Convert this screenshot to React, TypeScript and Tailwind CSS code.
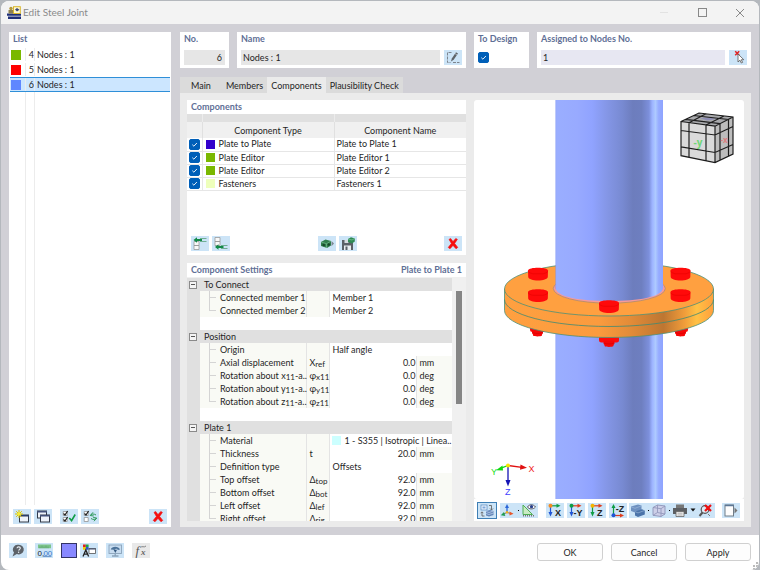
import { useState } from 'react'
import type { ReactNode } from 'react'
import clsx from 'clsx'

interface ListItem {
  no: number
  name: string
  color: string
}

interface ComponentRow {
  type: string
  name: string
  color: string
}

interface SettingRow {
  label: ReactNode
  symbol?: ReactNode
  text?: string
  value?: string
  unit?: string
  swatch?: string
}

interface SettingGroup {
  title: string
  rows: SettingRow[]
}

const listItems: ListItem[] = [
  { no: 4, name: 'Nodes : 1', color: 'bg-[#7ab800]' },
  { no: 5, name: 'Nodes : 1', color: 'bg-[#ff0000]' },
  { no: 6, name: 'Nodes : 1', color: 'bg-[#5f87ff]' },
]

const componentRows: ComponentRow[] = [
  { type: 'Plate to Plate', name: 'Plate to Plate 1', color: 'bg-[#3300cc]' },
  { type: 'Plate Editor', name: 'Plate Editor 1', color: 'bg-[#7ab800]' },
  { type: 'Plate Editor', name: 'Plate Editor 2', color: 'bg-[#7ab800]' },
  { type: 'Fasteners', name: 'Fasteners 1', color: 'bg-[#eeffbb]' },
]

function Sub({ children }: { children: ReactNode }) {
  return <span className="relative top-px text-[8px] leading-none">{children}</span>
}

const groups: SettingGroup[] = [
  {
    title: 'To Connect',
    rows: [
      { label: 'Connected member 1', text: 'Member 1' },
      { label: 'Connected member 2', text: 'Member 2' },
    ],
  },
  {
    title: 'Position',
    rows: [
      { label: 'Origin', text: 'Half angle' },
      { label: 'Axial displacement', symbol: <>X<Sub>ref</Sub></>, value: '0.0', unit: 'mm' },
      { label: <>Rotation about x<Sub>11</Sub>-a..</>, symbol: <>φ<Sub>x11</Sub></>, value: '0.0', unit: 'deg' },
      { label: <>Rotation about y<Sub>11</Sub>-a..</>, symbol: <>φ<Sub>y11</Sub></>, value: '0.0', unit: 'deg' },
      { label: <>Rotation about z<Sub>11</Sub>-a..</>, symbol: <>φ<Sub>z11</Sub></>, value: '0.0', unit: 'deg' },
    ],
  },
  {
    title: 'Plate 1',
    rows: [
      { label: 'Material', text: '1 - S355 | Isotropic | Linea..', swatch: 'bg-[#ccffff]' },
      { label: 'Thickness', symbol: 't', value: '20.0', unit: 'mm' },
      { label: 'Definition type', text: 'Offsets' },
      { label: 'Top offset', symbol: <>Δ<Sub>top</Sub></>, value: '92.0', unit: 'mm' },
      { label: 'Bottom offset', symbol: <>Δ<Sub>bot</Sub></>, value: '92.0', unit: 'mm' },
      { label: 'Left offset', symbol: <>Δ<Sub>lef</Sub></>, value: '92.0', unit: 'mm' },
      { label: 'Right offset', symbol: <>Δ<Sub>rig</Sub></>, value: '92.0', unit: 'mm' },
    ],
  },
]

// ---------- icons, all on an 18 x 15 grid ----------

function Icon({ children }: { children: ReactNode }) {
  return (
    <svg viewBox="0 0 18 15" className="h-[15px] w-[18px] shrink-0" fill="none" aria-hidden="true">
      {children}
    </svg>
  )
}

function DeleteIcon() {
  return (
    <Icon>
      <path d="M5 3.4 6.6 2.4 9 5.6 11.8 2.4 13.4 3.4 10.6 7.4 13.8 11.4 12 12.8 9 9.4 6 12.8 4.2 11.4 7.4 7.4Z" fill="#f50f0f" stroke="#f50f0f" strokeWidth=".6" />
    </Icon>
  )
}

function NewIcon() {
  return (
    <Icon>
      <rect x="6.5" y="6" width="9" height="7" fill="#eef3fa" stroke="#333a48" />
      <path d="M6 6.7h10" stroke="#2c3e6b" strokeWidth="1.6" />
      <path d="M6 1v8M2 5h8M3.2 2.2l5.6 5.6M8.8 2.2 3.2 7.8" stroke="#d8c400" strokeWidth="1" />
      <circle cx="6" cy="5" r="1.8" fill="#f8ee30" />
    </Icon>
  )
}

function CopyIcon() {
  return (
    <Icon>
      <rect x="3.5" y="2" width="9" height="7" fill="#eef3fa" stroke="#333a48" />
      <path d="M3 2.7h10" stroke="#44527a" strokeWidth="1.6" />
      <rect x="6.5" y="6" width="9" height="7" fill="#eef3fa" stroke="#333a48" />
      <path d="M6 6.7h10" stroke="#44527a" strokeWidth="1.6" />
    </Icon>
  )
}

function CheckAllIcon() {
  return (
    <Icon>
      <path d="M3.2 2.5h4v4h-4zM3.2 8.5h4v4h-4z" fill="#fff" stroke="#888" strokeWidth=".7" />
      <path d="m3.5 4.5 1.500 1.6L7.6 2M3.500 10.500 5 12.100 7.600 8" stroke="#222" strokeWidth="1.2" />
      <path d="m9.300 9 2.300 2.600L15.200 5.500" stroke="#0f9d45" strokeWidth="1.600" />
    </Icon>
  )
}

function InvertIcon() {
  return (
    <Icon>
      <path d="M3.2 2.5h4v4h-4zM3.2 8.5h4v4h-4z" fill="#fff" stroke="#888" strokeWidth=".7" />
      <path d="m3.5 4.5 1.500 1.600L7.600 2" stroke="#222" strokeWidth="1.200" />
      <path d="M9.500 6.500C10 4.800 13 4.500 15 6M12 3.300 9.300 6.500l3.500.5M15.500 9c-.5 1.700-3.500 2-5.500.5M13 12.200 15.700 9l-3.500-.5" stroke="#2f9a5a" strokeWidth="1" />
    </Icon>
  )
}

function InsertAboveIcon() {
  return (
    <Icon>
      <path d="M3 5.500h5v4H3zM3 9.500h5v4H3z" fill="#f8f8f8" stroke="#999" strokeWidth=".8" />
      <path d="M9 2.500h6.500M9 5.500h6.500" stroke="#65a889" strokeWidth=".9" />
      <path d="m2.500 4 3.500-2.800v1.800h5v2H6v1.800z" fill="#138a48" />
    </Icon>
  )
}

function InsertBelowIcon() {
  return (
    <Icon>
      <path d="M3 1.500h5v4H3zM3 5.500h5v4H3z" fill="#f8f8f8" stroke="#999" strokeWidth=".8" />
      <path d="M9 9.500h6.500M9 12.500h6.500" stroke="#65a889" strokeWidth=".9" />
      <path d="m3 11 3.500-2.800V10h5v2h-5v1.800z" fill="#138a48" />
    </Icon>
  )
}

function LoadIcon() {
  return (
    <Icon>
      <path d="m3 6 4.500-2.500L13 5v4.500L9 12l-6-2z" fill="#2f7d4d" />
      <path d="m3 6 5.500 1.700L13 5M8.500 7.700V12" stroke="#7fc49a" strokeWidth=".6" />
      <circle cx="5.700" cy="9" r="1.300" fill="#17492b" />
      <circle cx="10.800" cy="8.500" r="1.200" fill="#17492b" />
      <path d="m13.500 5 2.500 2.500-2.500 2.800z" fill="#7d8791" />
    </Icon>
  )
}

function SaveIcon() {
  return (
    <Icon>
      <path d="M3 4h9l2 2v8H3z" fill="#5a5f66" />
      <path d="M5.500 4h4v3h-4z" fill="#d5dae0" />
      <path d="M5 9.500h7V14H5z" fill="#e8ecf0" />
      <path d="M6.500 10.500h2V14h-2z" fill="#5a5f66" />
      <path d="m9 3 3-1.800 3.800 1.200v3.200L13 7.500 9 6z" fill="#2f8a55" />
      <path d="m9 3 4 1 2.800-1.600" stroke="#8ad0a5" strokeWidth=".6" />
    </Icon>
  )
}

function EditIcon() {
  return (
    <Icon>
      <path d="M7.500 2.500h-4v10h3M9 12.500h6.500" stroke="#7d858e" strokeDasharray="3 1" />
      <path d="m7 11.500.8-3L12 2.200l2 1.300-4.300 6.300z" fill="#5e6368" />
      <path d="m11 3.600 2 1.400" stroke="#dde6ee" strokeWidth=".6" />
    </Icon>
  )
}

function PickIcon() {
  return (
    <Icon>
      <path d="m6.200 1.200 4 4M10.200 1.200l-4 4" stroke="#e02222" strokeWidth="1.500" />
      <path d="M9 4v8l2-1.800 1.300 2.800 1.300-.6-1.300-2.700h2.500z" fill="#fff" stroke="#555" strokeWidth=".8" />
    </Icon>
  )
}

function HelpIcon() {
  return (
    <Icon>
      <path d="M9.800 1.800a5 4.800 0 1 1-2 9.200L3.500 13.500l1.500-4A4.800 4.800 0 0 1 9.800 1.800z" fill="#5c6269" />
      <path d="M8 5.300c.2-2 3.500-1.800 3.300 0-.1 1-1.500 1.100-1.600 2.300" stroke="#e8eef4" strokeWidth="1.100" />
      <circle cx="9.600" cy="9.300" r=".7" fill="#e8eef4" />
    </Icon>
  )
}

function UnitsIcon() {
  return (
    <Icon>
      <path d="M3 1.500h13v3.800H3z" fill="#7cc48a" />
      <path d="M5 3.500v1.800M7 2.800v2.500M9 3.500v1.800M11 2.800v2.500M13 3.500v1.800" stroke="#4c9360" strokeWidth=".6" />
      <text x="2.500" y="12.500" fontSize="8" fill="#222" fontFamily="Liberation Sans, sans-serif">0,</text>
      <text x="8.400" y="12.500" fontSize="8" fill="#3a78c8" fontFamily="Liberation Sans, sans-serif">00</text>
      <path d="M8.500 13.500h8" stroke="#5a87c0" strokeWidth=".8" />
    </Icon>
  )
}

function DisplayIcon() {
  return (
    <Icon>
      <path d="M3 1.500h2.800v2.600H3z" fill="#e02222" />
      <path d="M5.800 1.500h2.800v2.600H5.800z" fill="#1aa34a" />
      <path d="M3 4.100h2.800v2.600H3z" fill="#f0d000" />
      <path d="M5.800 4.100h2.800v2.600H5.800z" fill="#2a55cc" />
      <path d="m3 13.500 2.800-6.500 2.800 6.500M4 11.200h3.800" stroke="#222" strokeWidth="1.300" />
      <rect x="9" y="5.500" width="6.500" height="5" fill="#fff" stroke="#555" strokeWidth=".8" />
      <path d="M9 6h6.500" stroke="#3f4c70" />
    </Icon>
  )
}

function MonitorIcon() {
  return (
    <Icon>
      <rect x="3" y="2" width="12.500" height="8.500" fill="#c7dcf0" stroke="#8aa3ba" strokeWidth=".9" />
      <path d="M6 13h6.500M9.200 10.500V13" stroke="#8aa3ba" strokeWidth="1.300" />
      <path d="M4.800 6.500C5.500 3 12.500 2.500 14 6.500l-2.200.5c-.5-1.500-2.500-1.600-3.300-.3z" fill="#4b7299" />
      <path d="m7.500 6.500 3.500.3-1.700 3.200z" fill="#35597e" />
    </Icon>
  )
}

function FormulaIcon() {
  return (
    <Icon>
      <text x="3.500" y="11.500" fontSize="13" fontStyle="italic" fill="#555" fontFamily="Liberation Serif, serif">f</text>
      <text x="9" y="11.500" fontSize="9" fontStyle="italic" fontWeight="700" fill="#666" fontFamily="Liberation Serif, serif">x</text>
      <path d="M8.500 4.500c1.500-2 3.500.5 5.500-1.500" stroke="#777" strokeWidth=".9" />
    </Icon>
  )
}

function AxisIcon({ label, variant }: { label: string; variant: 'x' | 'y' | 'z' | 'zn' }) {
  const down = variant === 'z' ? '#0f9d45' : '#1f55d6'
  const across = variant === 'x' ? '#0f9d45' : '#e03c1c'
  const node = { x: '#f58a1f', y: '#0f9d45', z: '#f5b400', zn: '#1f55d6' }[variant]
  if (variant === 'zn') {
    return (
      <Icon>
        <path d="M4.500 12V3" stroke="#0f9d45" strokeWidth="1.200" />
        <path d="M2.500 5h4l-2-4z" fill="#0f9d45" />
        <path d="M4.500 12.500h7" stroke="#e03c1c" strokeWidth="1.200" />
        <path d="M11 10.500v4l4-2z" fill="#e03c1c" />
        <circle cx="4.500" cy="12.200" r="2" fill={node} />
        <text x="6.800" y="8.500" fontSize="9" fontWeight="700" fill="#222" fontFamily="Liberation Sans, sans-serif">{label}</text>
      </Icon>
    )
  }
  return (
    <Icon>
      <path d="M4.500 3v7" stroke={down} strokeWidth="1.200" />
      <path d="M2.500 9h4l-2 4.500z" fill={down} />
      <path d="M4.500 2.800h7" stroke={across} strokeWidth="1.200" />
      <path d="M10.500.8v4l4-2z" fill={across} />
      <circle cx="4.500" cy="2.800" r="2" fill={node} />
      <text x={label.length > 1 ? 6.5 : 9} y="12.500" fontSize="9" fontWeight="700" fill="#222" fontFamily="Liberation Sans, sans-serif">{label}</text>
    </Icon>
  )
}

function ViewSwitchIcon() {
  return (
    <Icon>
      <rect x="3" y="2" width="6" height="5" fill="#f2f8ff" stroke="#5f8ec4" strokeWidth=".8" />
      <path d="M4.500 3.500h3v2h-3z" fill="#7fa7d8" />
      <path d="M11 2.500h2.500V7M12 5.500 13.500 7 15 5.500M6.500 13H4V9M2.700 10.200 4 8.800l1.300 1.400" stroke="#666" strokeWidth=".9" />
      <path d="m8 8 4-1 3.500 1v4L11 13.500l-3-1z" fill="#6486b8" />
      <path d="m8 8.500 3 1 4.500-1.500M8 10.500l3 1 4.500-1.500" stroke="#b9cdea" strokeWidth=".8" />
    </Icon>
  )
}

function AxesIcon() {
  return (
    <Icon>
      <path d="M7 9.500V4" stroke="#2a66d8" strokeWidth="1.300" />
      <path d="M5 5h4L7 1z" fill="#2a66d8" />
      <path d="m7 9.500 4 1M7 9.500 3.500 11" stroke="#777" />
      <path d="m9.500 8.500 4 2.300-4 1.700z" fill="#e8562a" />
      <path d="m4 9-3.200 3.200 4.500.8z" fill="#1e9e50" />
      <circle cx="7" cy="9.300" r="1.200" fill="#f2b01e" />
    </Icon>
  )
}

function MeasureIcon() {
  return (
    <Icon>
      <path d="M3 2v9.500h9.500z" fill="#c9ebc4" stroke="#4fae55" strokeWidth="1" />
      <path d="M3 12.700h12" stroke="#777" strokeWidth="1.500" strokeDasharray="1 1" />
      <path d="M7.500 4C9 1 13.500 1 15.500 4c-2 2.500-6.500 2.500-8 0z" fill="#fff" stroke="#334" strokeWidth=".8" />
      <circle cx="11.500" cy="3.700" r="1.600" fill="#27408b" />
    </Icon>
  )
}

function SolidIcon() {
  return (
    <Icon>
      <path d="m2 3.500 7-2 3.500 1v4.500L6 9.500 2 8z" fill="#6d90c0" />
      <path d="m6 8.500 7-2.300 2.800 1.200v4.100L9 14l-3-1.500z" fill="#4a73a9" />
      <path d="m2 3.800 4 1.500 6.500-2.500M6 8.700l3 1.200 6.800-2.500" stroke="#a5bfdf" strokeWidth=".6" />
    </Icon>
  )
}

function WireBoxIcon() {
  return (
    <Icon>
      <path d="m3 4.500 4.500-2.500 7.500 1v8L11 13.500l-8-1.200z" fill="#cdcfe8" stroke="#8d93b8" strokeWidth=".9" />
      <path d="m3 4.500 8 1.200L15 3M11 5.700v7.800M7.500 2v7.500L3 12.300M7.500 9.500 15 11" stroke="#8d93b8" strokeWidth=".8" />
    </Icon>
  )
}

function PrintIcon() {
  return (
    <Icon>
      <path d="M5 1.500h8V5H5z" fill="#777" />
      <path d="M2 5h14v6H2z" fill="#5c5f63" />
      <path d="M5 8.500h8v5H5z" fill="#eee" stroke="#666" strokeWidth=".8" />
      <path d="M6.500 10.200h5M6.500 12h5" stroke="#999" strokeWidth=".7" />
    </Icon>
  )
}

function ResetZoomIcon() {
  return (
    <Icon>
      <circle cx="8" cy="6.500" r="3.800" fill="#dfeaf5" stroke="#555" strokeWidth="1.200" />
      <path d="m5.500 9.500-3 3.500" stroke="#555" strokeWidth="2" />
      <path d="m8 2 6 6M14 2 8 8" stroke="#ee1111" strokeWidth="2.200" />
      <path d="m11 11 2 2" stroke="#777" />
    </Icon>
  )
}

function PanelIcon() {
  return (
    <Icon>
      <rect x="3" y="2" width="8.500" height="11" fill="#fdfdfd" stroke="#6f7c88" />
      <path d="M3 2.500h8.500" stroke="#5c7796" strokeWidth="1.500" />
      <path d="m12.500 4.500 3 3-3 3z" fill="#777" />
    </Icon>
  )
}

function AppIcon() {
  return (
    <svg viewBox="0 0 14 13" className="h-[13px] w-[14px]" aria-hidden="true">
      <path d="M0 7.500h14v2.300H0zM1 10.500h13V13H1z" fill="#1f2f78" />
      <path d="M1.500 4H6v3.500H1.500z" fill="#8d8050" />
      <circle cx="4" cy="2.500" r="1.700" fill="#b59a3a" />
      <rect x="6.500" y=".7" width="6.800" height="6.800" fill="#fff8d0" stroke="#d8b62c" />
      <path d="m8 3.500 2-1.500 2.500 1.800-2.500 1.700z" fill="#3c4a7a" />
    </svg>
  )
}

interface ToolButtonProps {
  label: string
  children: ReactNode
  active?: boolean
  disabled?: boolean
}

function ToolButton({ label, children, active, disabled }: ToolButtonProps) {
  return (
    <button
      type="button"
      title={label}
      aria-label={label}
      disabled={disabled}
      className={clsx(
        'flex h-[15px] w-[18px] shrink-0 items-center justify-center',
        disabled ? 'bg-[#e9e9e9]' : 'bg-[#cce4f7]',
        active && 'outline outline-[#3f7fb5]',
      )}
    >
      {children}
    </button>
  )
}

function Tick({ label, id, checked, onChange }: { label: string; id?: string; checked: boolean; onChange: () => void }) {
  return (
    <span className="relative inline-flex size-[11px] align-top">
      <input
        type="checkbox"
        id={id}
        aria-label={label}
        checked={checked}
        onChange={onChange}
        className="peer size-[11px] appearance-none rounded-[2px] border border-[#888] bg-white checked:border-[#005fb8] checked:bg-[#005fb8]"
      />
      <svg viewBox="0 0 11 11" className="pointer-events-none absolute inset-0 hidden peer-checked:block" fill="none">
        <path d="M3.300 5.700 4.900 7.200 7.900 4" stroke="#fff" strokeWidth=".9" />
      </svg>
    </span>
  )
}

// ---------- 3D view ----------

function Bolt({ x, y }: { x: number; y: number }) {
  return (
    <g transform={`translate(${x} ${y})`}>
      <path d="M-10-3.500C-9.500-5.500-5-6.300 0-6.300s9.500.8 10 2.800L9.800 3C9.500 5.300 5 6.500 0 6.500S-9.500 5.300-9.800 3z" fill="#ff0a0a" />
      <path d="M-9.800-2.500C-8-.5-5-.2-4.500-.2H4.500C5-.2 8-.5 9.800-2.500" stroke="#e60000" strokeWidth=".6" fill="none" />
    </g>
  )
}

function Nut({ x, y, w }: { x: number; y: number; w: number }) {
  return (
    <g transform={`translate(${x} ${y})`}>
      <rect x={-w / 2} y="-8" width={w} height="9" rx="2.500" fill="#ff0a0a" />
      <path d="M-5.500-1h11v3.200L4.500 3.500v1C3 5.700-3 5.700-4.500 4.500v-1l-1-1.300z" fill="#f60606" />
      <path d="M-5 1.500C-2 2.800 2 2.800 5 1.500" stroke="#d00000" strokeWidth=".6" fill="none" />
    </g>
  )
}

function JointView() {
  return (
    <svg viewBox="0 0 270 399" preserveAspectRatio="xMidYMid slice" className="absolute inset-0 size-full" role="img" aria-label="Steel joint">
      <defs>
        <linearGradient id="pipe" x1="0" x2="1">
          <stop offset="0" stopColor="#7f95f5" />
          <stop offset=".01" stopColor="#9aaeff" />
          <stop offset=".2" stopColor="#98aaff" />
          <stop offset=".34" stopColor="#90a3ff" />
          <stop offset=".48" stopColor="#8496e6" />
          <stop offset=".62" stopColor="#788ad2" />
          <stop offset=".72" stopColor="#6d7dbd" />
          <stop offset=".8" stopColor="#6e7fc0" />
          <stop offset=".87" stopColor="#7d90dc" />
          <stop offset=".9" stopColor="#9db4ff" />
          <stop offset=".93" stopColor="#aecaff" />
          <stop offset=".96" stopColor="#96acff" />
          <stop offset="1" stopColor="#8ea3ff" />
        </linearGradient>
        <linearGradient id="rim" x1="0" x2="1">
          <stop offset="0" stopColor="#ffa040" />
          <stop offset=".45" stopColor="#fb9b3e" />
          <stop offset=".6" stopColor="#e38c38" />
          <stop offset=".76" stopColor="#bd7632" />
          <stop offset=".86" stopColor="#f09c3a" />
          <stop offset=".92" stopColor="#ffc145" />
          <stop offset="1" stopColor="#ff9f3c" />
        </linearGradient>
      </defs>
      <rect x="81.500" y="200" width="107.500" height="200" fill="url(#pipe)" />
      <Nut x={63.5} y={231} w={15} />
      <Nut x={206.5} y={231} w={15} />
      <Nut x={135} y={241.5} w={20} />
      <path d="M30.500 189v21.500a104.500 27 0 0 0 209 0V189z" fill="url(#rim)" stroke="#4d9079" strokeWidth=".8" />
      <path d="M30.500 199.500a104.500 27 0 0 0 209 0" fill="none" stroke="#3f8a75" strokeWidth=".8" />
      <ellipse cx="135" cy="189" rx="104.500" ry="27" fill="#ffa040" stroke="#4d9079" strokeWidth=".8" />
      <ellipse cx="135.300" cy="188.500" rx="56" ry="14.700" fill="#f79a9a" stroke="#a08a70" strokeWidth=".7" />
      <path d="M81.500-1V188.500c2 8.500 24 12.500 53.800 12.500s52-4 53.700-12.500V-1z" fill="url(#pipe)" />
      <Bolt x={64} y={174} />
      <Bolt x={206.5} y={174} />
      <Bolt x={64} y={195.5} />
      <Bolt x={206.5} y={195.5} />
      <Bolt x={135} y={206.5} />
    </svg>
  )
}

function NavCube() {
  return (
    <svg viewBox="0 0 54 52" className="absolute top-3 right-[10px] h-[52px] w-[54px]" aria-hidden="true">
      <path d="M1 9.500 19 1l34 4-18 9.200z" fill="#a9aaad" />
      <path d="M1 9.500 35 14.200V50.500L1 43.700z" fill="#dadada" />
      <path d="M35 14.200 53 5v37L35 50.500z" fill="#bdbdbd" />
      <path d="m20 6 10-.5 6 1.500-9 1.500z" fill="#8f8fb5" />
      <path
        d="M1 9.500 19 1l34 4v37L35 50.500 1 43.700zM1 9.500l34 4.700L53 5M35 14.200v36.300M9 10.700v34.600M26 13v35.600M1 18.500l34 4.500 18-8.500M1 34.800l34 5.700 18-8M40 11.700v36.500M48.500 7.500V44M9 10.700 26 1.800M26 13 44 4M5.500 7.300 40 11.700M13.500 3.500 48.500 7.500"
        fill="none"
        stroke="#1d1d1d"
        strokeWidth="1.200"
      />
      <text x="13.500" y="34" fontSize="10" fontWeight="700" fill="#6fd877" fontFamily="Open Sans, sans-serif">-y</text>
      <text x="40.500" y="31" fontSize="8" fontWeight="700" fill="#dc7f7f" fontFamily="Open Sans, sans-serif">-x</text>
    </svg>
  )
}

function AxesTriad() {
  return (
    <svg viewBox="0 0 48 36" className="absolute bottom-[2px] left-4 h-9 w-12" aria-hidden="true">
      <path d="M18 5v17" stroke="#1414b4" strokeWidth="1.300" />
      <path d="M15.500 19h5L18 25.500z" fill="#1414b4" />
      <path d="m18 4.500 14 1.800" stroke="#e01010" strokeWidth="1.300" />
      <path d="m30.500 3.500 6.500 3.300-7 2z" fill="#e01010" />
      <path d="m18 4.500-7 2.700" stroke="#10d810" strokeWidth="1.300" />
      <path d="m12.500 4.500-6.500 4.700 7 .3z" fill="#10d810" />
      <circle cx="18" cy="4.500" r="2" fill="#f7e600" />
      <text x="38.500" y="11" fontSize="9" fill="#f02020" fontFamily="Liberation Sans, sans-serif">X</text>
      <text x="1" y="13.500" fontSize="9" fill="#20e020" fontFamily="Liberation Sans, sans-serif">Y</text>
      <text x="15" y="34" fontSize="9" fill="#4040ff" fontFamily="Liberation Sans, sans-serif">Z</text>
    </svg>
  )
}

// ---------- panels ----------

const heading = 'text-[9px] leading-[14px] font-bold text-[#5f6f96]'

function NodeList() {
  const [selected, setSelected] = useState(6)

  return (
    <section className="row-span-2 flex min-h-0 flex-col bg-white">
      <h2 className={clsx(heading, 'px-1 pb-px')}>List</h2>
      <ul className="flex flex-1 flex-col">
        {listItems.map((item) => (
          <li key={item.no} className="px-px">
            <button
              type="button"
              onClick={() => setSelected(item.no)}
              className={clsx(
                'flex h-[15px] w-full items-center border-y text-left',
                selected === item.no ? 'border-[#2f8fd8] bg-[#cce6ff]' : 'border-transparent',
              )}
            >
              <span className={clsx('ml-px size-[10px]', item.color)} />
              <span className="ml-1 w-[9px] border-l border-[#ececec] text-right">{item.no}</span>
              <span className="border-l border-[#ececec] pl-[2px]">{item.name}</span>
            </button>
          </li>
        ))}
        <li aria-hidden="true" className="ml-4 w-[10px] flex-1 border-x border-[#ececec]" />
      </ul>
      <div className="flex items-center px-1 pt-1 pb-[3px]">
        <div className="flex gap-[3px]">
          <ToolButton label="New"><NewIcon /></ToolButton>
          <ToolButton label="Copy"><CopyIcon /></ToolButton>
        </div>
        <div className="ml-2 flex gap-[3px]">
          <ToolButton label="Select all"><CheckAllIcon /></ToolButton>
          <ToolButton label="Invert selection"><InvertIcon /></ToolButton>
        </div>
        <div className="ml-auto">
          <ToolButton label="Delete"><DeleteIcon /></ToolButton>
        </div>
      </div>
    </section>
  )
}

function ComponentsPanel() {
  const [enabled, setEnabled] = useState([true, true, true, true])

  const toggle = (index: number) => {
    setEnabled(enabled.map((on, i) => (i === index ? !on : on)))
  }

  return (
    <section className="flex h-[155px] shrink-0 flex-col bg-white">
      <h2 className={clsx(heading, 'px-1')}>Components</h2>
      <table className="w-full table-fixed border-collapse">
        <colgroup>
          <col className="w-[15px]" />
          <col />
          <col />
        </colgroup>
        <thead>
          <tr className="h-2 bg-[#e0e0e0]">
            <td className="border-r border-[#ececec] p-0" />
            <td className="border-r border-[#ececec] p-0" />
            <td className="p-0" />
          </tr>
          <tr className="h-4 bg-[#f0f0f0]">
            <th className="border-r border-[#e0e0e0] p-0" aria-label="Active" />
            <th className="border-r border-[#e0e0e0] p-0 font-normal">Component Type</th>
            <th className="p-0 font-normal">Component Name</th>
          </tr>
        </thead>
        <tbody className="leading-3">
          {componentRows.map((row, index) => (
            <tr key={row.name} className="h-[13px] border-b border-[#e6e6e6]">
              <td className="border-r border-[#e6e6e6] p-0 text-center">
                <span className="flex justify-center">
                  <Tick label={row.name} checked={enabled[index]} onChange={() => toggle(index)} />
                </span>
              </td>
              <td className="border-r border-[#e6e6e6] p-0">
                <span className="flex items-center gap-1 pl-[3px]">
                  <span className={clsx('size-[9px]', row.color)} />
                  {row.type}
                </span>
              </td>
              <td className="p-0 pl-[2px]">{row.name}</td>
            </tr>
          ))}
        </tbody>
      </table>
      <div className="mt-auto flex items-center px-1 pb-1">
        <div className="flex gap-[3px]">
          <ToolButton label="Insert above"><InsertAboveIcon /></ToolButton>
          <ToolButton label="Insert below"><InsertBelowIcon /></ToolButton>
        </div>
        <div className="mr-[87px] ml-auto flex gap-[3px]">
          <ToolButton label="Load component"><LoadIcon /></ToolButton>
          <ToolButton label="Save component"><SaveIcon /></ToolButton>
        </div>
        <ToolButton label="Delete component"><DeleteIcon /></ToolButton>
      </div>
    </section>
  )
}

function SettingsGroup({ group, last }: { group: SettingGroup; last: boolean }) {
  const [open, setOpen] = useState(true)

  return (
    <tbody>
      <tr className="h-[13px] bg-[#e0e0e0]">
        <td className="p-0">
          <button
            type="button"
            aria-label={group.title}
            aria-expanded={open}
            onClick={() => setOpen(!open)}
            className="ml-[2px] flex size-2 items-center justify-center border border-[#8a8a8a] bg-[#f4f4f4]"
          >
            <span className="h-px w-1 bg-[#555]" />
          </button>
        </td>
        <th colSpan={4} className="p-0 pl-1 text-left font-normal">{group.title}</th>
      </tr>
      {open && group.rows.map((row, index) => (
        <tr key={index} className="h-[13px]">
          <td className="bg-[#e0e0e0] p-0" />
          <td className="border-r border-[#e4e4e4] bg-[#f9faf5] p-0">
            <span className="flex h-[13px]">
              <span className="relative ml-[9px] w-[11px] shrink-0">
                <span className={clsx('absolute left-0 w-px bg-[#d4d4d4]', index === group.rows.length - 1 ? 'top-0 h-[7px]' : 'inset-y-0')} />
                <span className="absolute top-[6px] left-0 h-px w-[7px] bg-[#d4d4d4]" />
              </span>
              <span className="whitespace-nowrap">{row.label}</span>
            </span>
          </td>
          <td className="border-r border-[#e4e4e4] bg-[#f9faf5] p-0 pl-[2px] whitespace-nowrap">{row.symbol}</td>
          {row.text ? (
            <td colSpan={2} className="bg-white p-0 pl-[2px]">
              <span className="flex items-center whitespace-nowrap">
                {row.swatch && <span className={clsx('mr-[3px] size-[9px] shrink-0', row.swatch)} />}
                {row.text}
              </span>
            </td>
          ) : (
            <>
              <td className="border-r border-[#e4e4e4] bg-white p-0 pr-px text-right">{row.value}</td>
              <td className="bg-[#f9faf5] p-0 pl-[2px]">{row.unit}</td>
            </>
          )}
        </tr>
      ))}
      {!last && (
        <tr className="h-[13px]">
          <td className="bg-[#e0e0e0] p-0" />
          <td colSpan={4} className="bg-white p-0" />
        </tr>
      )}
    </tbody>
  )
}

function SettingsPanel() {
  return (
    <section className="flex min-h-0 flex-1 flex-col">
      <div className="flex justify-between bg-white px-1">
        <h2 className={heading}>Component Settings</h2>
        <span className={heading}>Plate to Plate 1</span>
      </div>
      <div className="flex min-h-0 flex-1 bg-[#f0f0f0] pt-px">
        <div className="min-h-0 flex-1 overflow-y-auto [scrollbar-width:none]">
          <table className="w-full table-fixed border-collapse">
            <colgroup>
              <col className="w-[13px]" />
              <col />
              <col className="w-[23px]" />
              <col className="w-[87px]" />
              <col className="w-[35px]" />
            </colgroup>
            {groups.map((group, index) => (
              <SettingsGroup key={group.title} group={group} last={index === groups.length - 1} />
            ))}
          </table>
        </div>
        <div className="w-[14px] shrink-0 pt-[13px]">
          <div className="ml-1 h-[49%] w-[6px] bg-[#858585]" />
        </div>
      </div>
    </section>
  )
}

function ViewToolbar() {
  return (
    <div className="flex h-[22px] shrink-0 items-center bg-white px-1">
      <ToolButton label="Switch view" active><ViewSwitchIcon /></ToolButton>
      <div className="ml-1 flex items-center justify-between bg-[#cce4f7]">
        <ToolButton label="Axes"><AxesIcon /></ToolButton>
        <span className="mr-px size-px bg-black" />
        <ToolButton label="Measure"><MeasureIcon /></ToolButton>
      </div>
      <div className="ml-2 flex gap-[3px]">
        <ToolButton label="View in X"><AxisIcon label="X" variant="x" /></ToolButton>
        <ToolButton label="View in -Y"><AxisIcon label="-Y" variant="y" /></ToolButton>
        <ToolButton label="View in Z"><AxisIcon label="Z" variant="z" /></ToolButton>
        <ToolButton label="View in -Z"><AxisIcon label="-Z" variant="zn" /></ToolButton>
      </div>
      <div className="ml-[2px] flex items-center bg-[#cce4f7]">
        <ToolButton label="Solid display"><SolidIcon /></ToolButton>
        <span className="mx-px size-px bg-black" />
        <ToolButton label="Transparent display"><WireBoxIcon /></ToolButton>
        <span className="mx-px size-px bg-black" />
        <ToolButton label="Print"><PrintIcon /></ToolButton>
        <svg viewBox="0 0 6 4" className="mx-px h-1 w-[6px]" aria-hidden="true">
          <path d="M.5.5h5L3 3.500z" fill="#111" />
        </svg>
        <ToolButton label="Reset zoom"><ResetZoomIcon /></ToolButton>
      </div>
      <div className="ml-auto">
        <ToolButton label="Toggle panel"><PanelIcon /></ToolButton>
      </div>
    </div>
  )
}

const tabs = ['Main', 'Members', 'Components', 'Plausibility Check']

export default function App() {
  const [tab, setTab] = useState('Components')
  const [toDesign, setToDesign] = useState(true)
  const [nodes, setNodes] = useState('1')

  return (
    <div className="h-screen bg-[#b4b8bd] pt-px pr-px pl-px font-[Lato,'Open_Sans',sans-serif] text-[9px] leading-[13px] text-[#1f1f1f]">
      <div className="flex h-full flex-col overflow-hidden rounded-lg bg-white">
        <header className="flex h-[23px] shrink-0 items-center bg-[#f3f3f3] pr-[10px] pl-[6px] text-[#8b8b8b]">
          <AppIcon />
          <h1 className="ml-[2px] flex-1 text-[10px]">Edit Steel Joint</h1>
          <div className="flex gap-5">
            <button type="button" aria-label="Minimize" disabled className="flex size-[18px] items-center justify-center">
              <span className="h-px w-2 bg-[#e2e2e2]" />
            </button>
            <button type="button" aria-label="Maximize" className="flex size-[18px] items-center justify-center">
              <span className="size-[9px] border border-[#888]" />
            </button>
            <button type="button" aria-label="Close" className="flex size-[18px] items-center justify-center">
              <svg viewBox="0 0 10 10" className="size-[10px]" fill="none">
                <path d="m1 1 8 8M9 1 1 9" stroke="#888" />
              </svg>
            </button>
          </div>
        </header>

        <main className="grid min-h-0 flex-1 grid-cols-[162fr_571fr] grid-rows-[auto_minmax(0,1fr)] gap-x-[9px] bg-[#d1d0d6] p-2">
          <NodeList />

          <div className="grid grid-cols-[49fr_229fr_55fr_214fr] gap-x-2 pb-[9px]">
            <div className="flex flex-col bg-white px-1 pb-[3px]">
              <label htmlFor="no" className={heading}>No.</label>
              <input id="no" readOnly value="6" className="mt-1 h-[15px] w-full bg-[#e6e6e6] px-[3px] text-right" />
            </div>
            <div className="flex flex-col bg-white px-1 pb-[3px]">
              <label htmlFor="name" className={heading}>Name</label>
              <div className="mt-1 flex gap-1">
                <input id="name" readOnly value="Nodes : 1" className="h-[15px] min-w-0 flex-1 bg-[#e6e6e6] px-[2px]" />
                <ToolButton label="Edit name"><EditIcon /></ToolButton>
              </div>
            </div>
            <div className="flex flex-col bg-white px-1 pb-[3px]">
              <label htmlFor="to-design" className={heading}>To Design</label>
              <div className="mt-[6px]">
                <Tick id="to-design" label="To Design" checked={toDesign} onChange={() => setToDesign(!toDesign)} />
              </div>
            </div>
            <div className="flex flex-col bg-white px-1 pb-[3px]">
              <label htmlFor="nodes" className={heading}>Assigned to Nodes No.</label>
              <div className="mt-1 flex gap-1">
                <input
                  id="nodes"
                  value={nodes}
                  onChange={(e) => setNodes(e.target.value)}
                  className="h-[15px] min-w-0 flex-1 bg-[#e7e7f2] px-[2px]"
                />
                <ToolButton label="Pick nodes"><PickIcon /></ToolButton>
              </div>
            </div>
          </div>

          <div className="flex min-h-0 flex-col">
            <div role="tablist" className="flex">
              {tabs.map((name) => (
                <button
                  key={name}
                  type="button"
                  role="tab"
                  aria-selected={tab === name}
                  onClick={() => setTab(name)}
                  className={clsx(
                    'h-4 px-1 first:px-[11px]',
                    tab === name ? 'bg-[#ebebeb]' : 'bg-[#dbdbdb]',
                  )}
                >
                  {name}
                </button>
              ))}
            </div>
            <div className="grid min-h-0 flex-1 grid-cols-[279fr_270fr] gap-x-2 bg-[#ebebeb] px-[7px] pt-[7px] pb-[6px]">
              <div className="flex min-h-0 flex-col gap-2">
                <ComponentsPanel />
                <SettingsPanel />
              </div>
              <div className="flex min-h-0 flex-col">
                <div className="relative min-h-0 flex-1 overflow-hidden rounded-[3px] bg-white">
                  <JointView />
                  <NavCube />
                  <AxesTriad />
                </div>
                <ViewToolbar />
              </div>
            </div>
          </div>
        </main>

        <footer className="relative flex h-[35px] shrink-0 items-start px-2 pt-2">
          <div className="flex gap-2">
            <ToolButton label="Help"><HelpIcon /></ToolButton>
            <ToolButton label="Units"><UnitsIcon /></ToolButton>
            <div className="flex gap-[3px]">
              <button type="button" aria-label="Color" className="h-[15px] w-4 border border-[#333366] bg-[#8888ff]" />
              <ToolButton label="Display properties"><DisplayIcon /></ToolButton>
            </div>
            <ToolButton label="View settings"><MonitorIcon /></ToolButton>
            <ToolButton label="Formula" disabled><FormulaIcon /></ToolButton>
          </div>
          <div className="ml-auto flex gap-2">
            {['OK', 'Cancel', 'Apply'].map((name) => (
              <button key={name} type="button" className="h-[18px] w-[66px] rounded-[3px] border border-[#d0d0d0] bg-[#fdfdfd]">
                {name}
              </button>
            ))}
          </div>
          <svg viewBox="0 0 8 8" className="absolute right-0 bottom-0 size-2" fill="#bbb" aria-hidden="true">
            <path d="M5 0h2v2H5zM5 3h2v2H5zM5 6h2v2H5zM2 3h2v2H2zM2 6h2v2H2z" />
          </svg>
        </footer>
      </div>
    </div>
  )
}
